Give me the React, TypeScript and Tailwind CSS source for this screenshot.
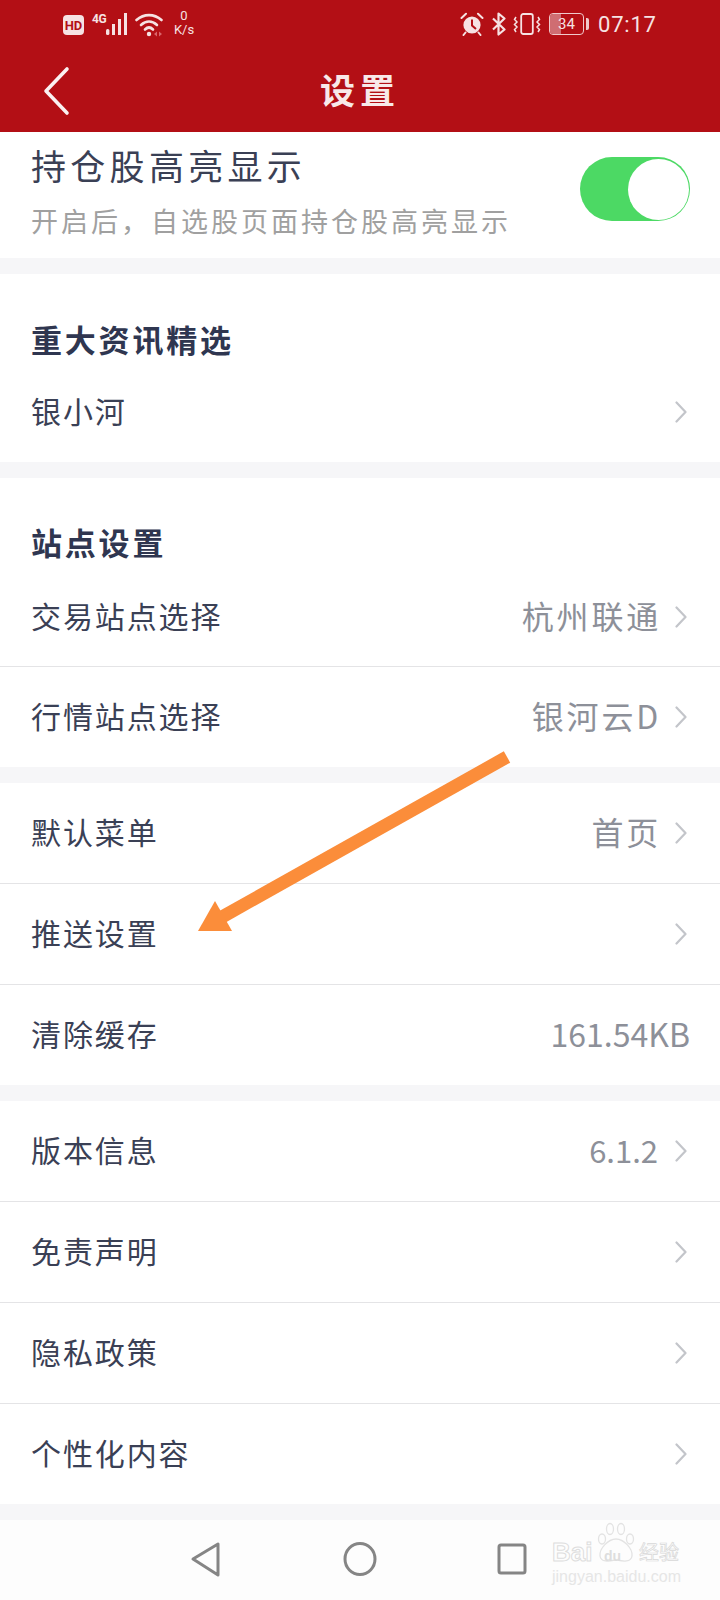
import React from 'react';

const FONT = "font-['Noto_Sans_CJK_SC','Noto_Sans',sans-serif]";

function Chevron() {
  return (
    <svg width="12" height="24" viewBox="0 0 12 24" className="shrink-0">
      <path d="M1.5 2.5 L10.5 12 L1.5 21.5" fill="none" stroke="#c3c5ca" strokeWidth="2.2" strokeLinecap="round" strokeLinejoin="round" />
    </svg>
  );
}

function Row({ label, value, valueClass = 'text-[32px] tracking-[2.8px] mr-[14px]', arrow = true, last = false, className = 'h-[101px]' }: { label: string; value?: string; valueClass?: string; arrow?: boolean; last?: boolean; className?: string }) {
  return (
    <div className={`flex items-center pl-[31px] pr-[33px] bg-white ${className} ${last ? '' : 'border-b border-[#e4e4e6]'}`}>
      <span className="flex-1 -mt-[4px] text-[30px] leading-none tracking-[1.9px] text-[#3a4055]">{label}</span>
      {value && <span className={`-mt-[4px] text-[#8d9099] leading-none ${valueClass}`}>{value}</span>}
      {arrow && <Chevron />}
    </div>
  );
}

function Heading({ children, className }: { children: string; className: string }) {
  return <div className={`pl-[31px] text-[31px] leading-[30px] font-bold tracking-[2.8px] text-[#2f3650] ${className}`}>{children}</div>;
}

function StatusBar() {
  return (
    <div className="relative h-[50px] text-[#f6e2e3]">
      {/* left icons */}
      <div className="absolute left-[63px] top-[13px] flex items-start">
        <span className="mt-[2px] flex h-[20px] w-[21px] items-center justify-center rounded-[4px] bg-[#f6e2e3] text-[13px] font-bold leading-none text-[#b30f15] font-['Roboto',sans-serif]">HD</span>
        <span className="ml-[8px] text-[12px] font-bold leading-[12px] tracking-[-0.5px] font-['Roboto',sans-serif]">4G</span>
        <svg width="24" height="22" viewBox="0 0 24 22" className="-ml-[1px]">
          <rect x="1" y="16" width="3.4" height="6" rx="1.5" fill="currentColor" />
          <rect x="7" y="11" width="3" height="11" fill="currentColor" />
          <rect x="13" y="6" width="3" height="16" fill="currentColor" />
          <rect x="19" y="0" width="3" height="22" fill="currentColor" />
        </svg>
        <svg width="30" height="24" viewBox="0 0 30 24" className="ml-[6px]">
          <path d="M1.5 7 C9 0.5 19 0.5 26.5 7" fill="none" stroke="currentColor" strokeWidth="2.6" strokeLinecap="round" />
          <path d="M6 12 C11 7.5 17 7.5 22 12" fill="none" stroke="currentColor" strokeWidth="2.6" strokeLinecap="round" />
          <path d="M10 16.5 C12.5 14 15.5 14 18 16.5" fill="none" stroke="currentColor" strokeWidth="2.6" strokeLinecap="round" />
          <circle cx="14" cy="21" r="2.2" fill="currentColor" />
          <path d="M19 21 L22 18.5 V23.5 Z M24 18.5 L27 21 L24 23.5 Z" fill="#d9666c" />
        </svg>
      </div>
      <div className="absolute left-[172px] top-[9px] w-[24px] text-center font-['Roboto',sans-serif] text-[13px] leading-[14px]">
        <div>0</div>
        <div>K/s</div>
      </div>
      {/* right icons */}
      <svg width="24" height="24" viewBox="0 0 24 24" className="absolute left-[460px] top-[12px]">
        <circle cx="12" cy="13" r="8.6" fill="currentColor" />
        <path d="M12 7.5 V13.5 L16 17" fill="none" stroke="#b30f15" strokeWidth="2" />
        <path d="M1.5 6 L6 1.8 M22.5 6 L18 1.8 M5.5 20.5 L3.5 23 M18.5 20.5 L20.5 23" stroke="currentColor" strokeWidth="2" strokeLinecap="round" />
      </svg>
      <svg width="16" height="24" viewBox="0 0 16 24" className="absolute left-[491px] top-[12px]">
        <path d="M2 6.5 L13.5 17.5 L7.5 22.5 V1.5 L13.5 6.5 L2 17.5" fill="none" stroke="currentColor" strokeWidth="2.2" strokeLinejoin="round" />
      </svg>
      <svg width="28" height="22" viewBox="0 0 28 22" className="absolute left-[513px] top-[13px]">
        <rect x="8.2" y="1" width="11.6" height="20" rx="2" fill="none" stroke="currentColor" strokeWidth="1.8" />
        <path d="M3 4 L1.5 6.5 L4 9 L1.5 11.5 L4 14 L1.5 16.5 L3 19 M25 4 L26.5 6.5 L24 9 L26.5 11.5 L24 14 L26.5 16.5 L25 19" fill="none" stroke="currentColor" strokeWidth="1.5" />
      </svg>
      <div className="absolute left-[549px] top-[13px] flex items-center">
        <div className="relative flex h-[22px] w-[35px] items-center justify-center overflow-hidden rounded-[4px] border-[1.5px] border-[#f0c9cb]">
          <div className="absolute left-0 top-0 h-full w-[11px] bg-[#cf6d72]" />
          <span className="relative font-['Roboto',sans-serif] text-[15px] leading-none">34</span>
        </div>
        <div className="ml-[2px] h-[12px] w-[3px] rounded-r-[2px] bg-[#f0c9cb]" />
      </div>
      <span className="absolute left-[598px] top-[12px] font-['Roboto',sans-serif] text-[22px] leading-[26px] tracking-[0.8px]">07:17</span>
    </div>
  );
}

function NavBar() {
  return (
    <div className="flex h-[80px] items-start bg-[#fdfdfd] pl-[189px] pt-[21px]">
      <svg width="32" height="36" viewBox="0 0 32 36">
        <path d="M4 18 L29 3 V34 Z" fill="none" stroke="#858585" strokeWidth="3" strokeLinejoin="round" />
      </svg>
      <svg width="34" height="36" viewBox="0 0 34 36" className="ml-[122px]">
        <ellipse cx="17" cy="18" rx="15" ry="15.5" fill="none" stroke="#858585" strokeWidth="3" />
      </svg>
      <svg width="30" height="32" viewBox="0 0 30 32" className="ml-[120px] mt-[2px]">
        <rect x="2" y="2" width="26" height="28" rx="2" fill="none" stroke="#858585" strokeWidth="3" />
      </svg>
    </div>
  );
}

export default function App() {
  return (
    <div className={`relative h-[1600px] w-[720px] overflow-hidden bg-[#f6f6f8] ${FONT}`}>
      <div className="h-[132px] bg-[#b30f15]">
        <StatusBar />
        <div className="relative flex h-[82px] items-center justify-center">
          <svg width="32" height="52" viewBox="0 0 32 52" className="absolute left-[41px] top-[15px]">
            <path d="M26 4 L5 26 L26 48" fill="none" stroke="#fbf1f1" strokeWidth="3.6" strokeLinecap="round" strokeLinejoin="round" />
          </svg>
          <span className="text-[35px] font-bold leading-none tracking-[5px] text-[#f8e9e9] -mt-[6px]">设置</span>
        </div>
      </div>

      <div className="flex h-[126px] items-start justify-between bg-white pl-[31px] pr-[30px]">
        <div>
          <div className="mt-[13px] text-[35px] leading-[40px] tracking-[4.3px] text-[#3a4055]">持仓股高亮显示</div>
          <div className="mt-[21px] text-[27px] leading-[30px] tracking-[3px] text-[#a0a0a0]">开启后，自选股页面持仓股高亮显示</div>
        </div>
        <div className="mt-[25px] flex h-[64px] w-[110px] justify-end rounded-full bg-[#4cd964] p-[1.5px]">
          <div className="h-[61px] w-[61px] rounded-full bg-white" />
        </div>
      </div>

      <div className="mt-[16px] bg-white">
        <Heading className="pt-[50px] pb-[8px]">重大资讯精选</Heading>
        <Row label="银小河" last className="h-[100px]" />
      </div>

      <div className="mt-[16px] bg-white">
        <Heading className="pt-[49px] pb-[10px]">站点设置</Heading>
        <Row label="交易站点选择" value="杭州联通" className="h-[100px]" />
        <Row label="行情站点选择" value="银河云D" last className="h-[100px]" />
      </div>

      <div className="mt-[16px]">
        <Row label="默认菜单" value="首页" />
        <Row label="推送设置" />
        <Row label="清除缓存" value="161.54KB" valueClass="text-[32px] -mr-[3px]" arrow={false} last className="h-[100px]" />
      </div>

      <div className="mt-[16px]">
        <Row label="版本信息" value="6.1.2" valueClass="text-[31px] mr-[17px]" />
        <Row label="免责声明" />
        <Row label="隐私政策" />
        <Row label="个性化内容" last className="h-[100px]" />
      </div>

      <div className="absolute bottom-0 left-0 w-full">
        <NavBar />
      </div>

      {/* annotation arrow */}
      <svg width="720" height="1600" viewBox="0 0 720 1600" className="pointer-events-none absolute left-0 top-0">
        <path d="M507 757 L222 917" stroke="#fb8d3a" strokeWidth="13" />
        <path d="M198 931 L215 901 L232 931 Z" fill="#fb8d3a" />
      </svg>

      {/* watermark */}
      <div className="pointer-events-none absolute left-[551px] top-[1520px] h-[70px] w-[135px]">
        <svg width="40" height="42" viewBox="0 0 40 42" className="absolute left-[45px] top-[2px]">
          <g fill="none" stroke="#e3e3e3" strokeWidth="1.3">
            <ellipse cx="6" cy="17" rx="3.5" ry="5" />
            <ellipse cx="14" cy="7" rx="3.5" ry="5.5" />
            <ellipse cx="25" cy="7" rx="3.5" ry="5.5" />
            <ellipse cx="34" cy="17" rx="3.5" ry="5" />
            <path d="M20 17 C12 17 3 27 4 34 C5 41 14 39 20 38 C26 39 35 41 36 34 C37 27 28 17 20 17 Z" />
          </g>
        </svg>
        <span className="absolute left-[1px] top-[19px] font-['Liberation_Sans',sans-serif] text-[26px] font-bold leading-none text-transparent [-webkit-text-stroke:1px_#dedede]">Bai</span>
        <span className="absolute left-[53px] top-[29px] font-['Liberation_Sans',sans-serif] text-[14px] font-bold leading-none text-[#dedede]">du</span>
        <span className="absolute left-[88px] top-[22px] text-[20px] leading-none text-transparent [-webkit-text-stroke:0.7px_#d8d8d8]">经验</span>
        <span className="absolute left-[1px] top-[49px] font-['Liberation_Sans',sans-serif] text-[16px] leading-none text-[#e6e6e6]">jingyan.baidu.com</span>
      </div>
    </div>
  );
}
